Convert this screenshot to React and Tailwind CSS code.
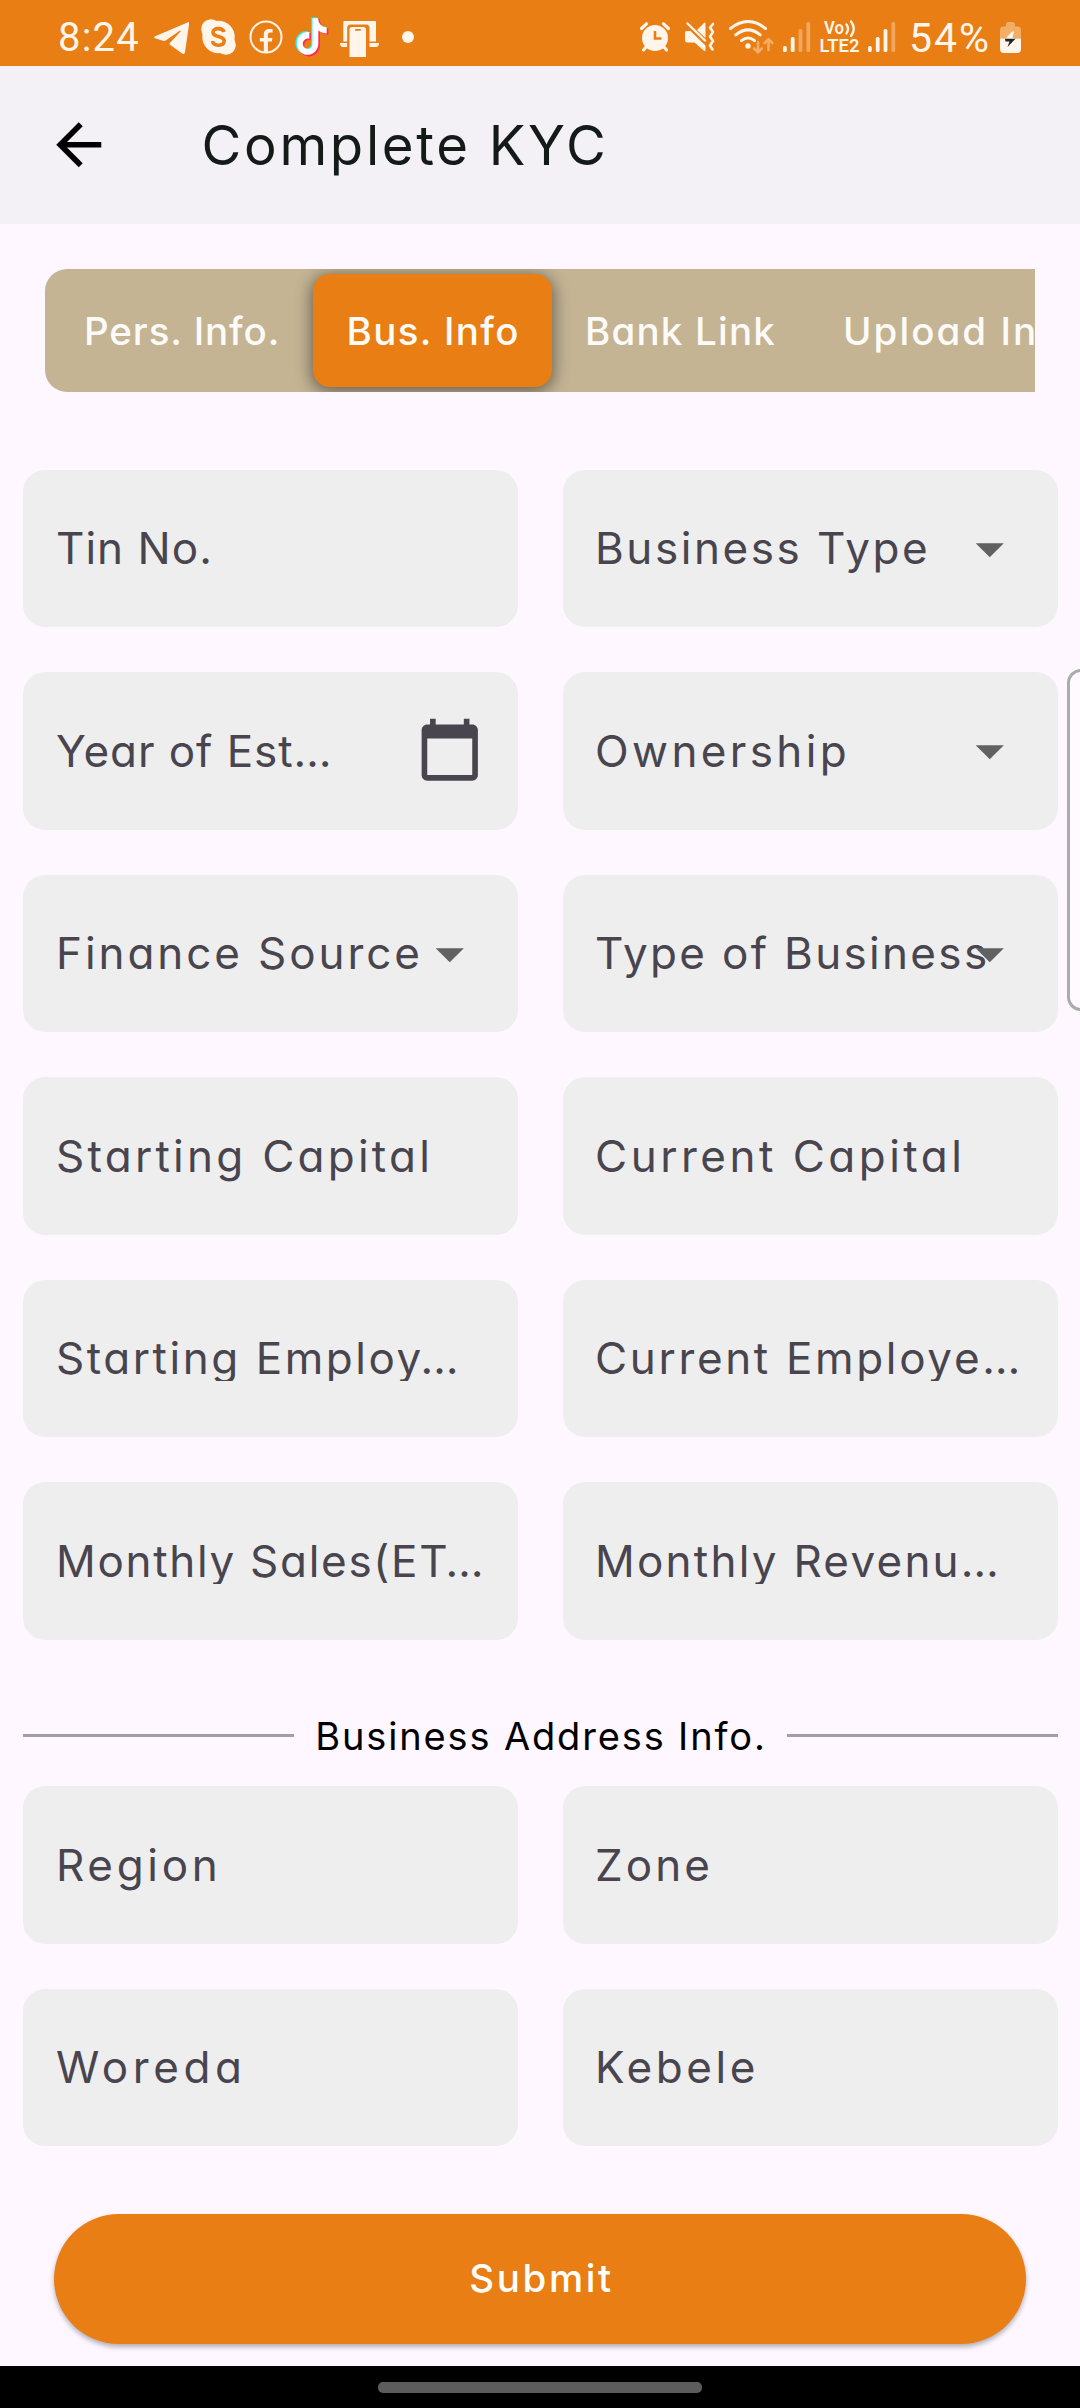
import React from 'react';

const TIKTOK =
  'M12.525.02c1.31-.02 2.61-.01 3.91-.02.08 1.53.63 3.09 1.75 4.17 1.12 1.11 2.7 1.62 4.24 1.79v4.03c-1.44-.05-2.89-.35-4.2-.97-.57-.26-1.1-.59-1.62-.93-.01 2.92.01 5.84-.02 8.75-.08 1.4-.54 2.79-1.35 3.94-1.31 1.92-3.58 3.17-5.91 3.21-1.43.08-2.86-.31-4.08-1.03-2.02-1.19-3.44-3.37-3.65-5.71-.02-.5-.03-1-.01-1.49.18-1.9 1.12-3.72 2.58-4.96 1.66-1.44 3.98-2.13 6.15-1.72.02 1.48-.04 2.96-.04 4.44-.99-.32-2.15-.23-3.02.37-.63.41-1.11 1.04-1.36 1.75-.21.51-.15 1.07-.14 1.61.24 1.64 1.82 3.02 3.5 2.87 1.12-.01 2.19-.66 2.77-1.61.19-.33.4-.67.41-1.06.1-1.79.06-3.57.07-5.36.01-4.03-.01-8.05.02-12.07z';

function Signal({ bars, className }) {
  const heights = [6, 15, 23, 30];
  return (
    <svg className={className} width="28" height="30" viewBox="0 0 28 30">
      {heights.map((h, i) => (
        <rect key={h} x={i * 7.8} y={30 - h} width="3.8" height={h} rx="1.6" fill="#fff5ea" fillOpacity={i < bars ? 1 : 0.35} />
      ))}
    </svg>
  );
}

function StatusBar() {
  return (
    <div className="flex h-[66px] shrink-0 items-center bg-[#e87e14] pt-2 text-[#fff5ea]">
      <span className="ml-[58px] w-[96px] pt-[2px] font-['Roboto',sans-serif] text-[40px] leading-none tracking-[1.2px]">8:24</span>
      {/* Telegram */}
      <svg width="35" height="33" viewBox="0 0 35 33" className="mt-[3px]" fill="currentColor">
        <path d="M34 .3C35 0 35.400.5 35.200 1.500L31 30C30.800 32 29.800 32.500 28.200 31.400L16 22.800c-.7-.5-.7-1.200-.1-1.900L26.500 9.400c.5-.7-.1-1.100-.8-.6L12 18.300c-1 .7-2 .8-3.200.4L1.200 16.300c-1.400-.4-1.400-1.400 0-2z" />
      </svg>
      {/* Skype */}
      <svg className="ml-[12px]" width="35" height="36" viewBox="0 0 35 36">
        <g fill="currentColor">
          <circle cx="17.500" cy="18" r="16.200" />
          <circle cx="10" cy="10" r="9.800" />
          <circle cx="25" cy="26" r="9.800" />
        </g>
        <path d="M23 13c-.8-2.500-2.800-3.400-5.700-3.400-3.300 0-5.300 1.500-5.300 3.900 0 5.200 11.200 2.600 11.200 8.300 0 2.800-2.300 4.400-5.700 4.400-3.200 0-5.500-1.300-6-4.200" fill="none" stroke="#e87e14" strokeWidth="3.600" />
      </svg>
      {/* Facebook */}
      <svg className="ml-[13px]" width="34" height="34" viewBox="0 0 34 34">
        <circle cx="17" cy="17" r="15.500" fill="none" stroke="currentColor" strokeWidth="2" />
        <path d="M14.800 32V21.500h-4v-3.600h4v-3.400c0-3.800 2.200-5.600 5.600-5.600 1.300 0 2.400.1 3.200.3v3.300h-2.200c-1.800 0-2.500.9-2.500 2.400v3h4.600l-.7 3.600h-3.900V32z" fill="currentColor" />
      </svg>
      {/* TikTok */}
      <svg className="ml-[12px] overflow-visible" width="35" height="40" viewBox="0 0 35 40">
        <g transform="translate(-1.900 .2) scale(1.450 1.550)"><path d={TIKTOK} fill="#25f4ee" /></g>
        <g transform="translate(.9 2.200) scale(1.450 1.550)"><path d={TIKTOK} fill="#fe2c55" /></g>
        <g transform="translate(-.4 1.300) scale(1.430 1.520)"><path d={TIKTOK} fill="#fff" /></g>
      </svg>
      {/* Linked devices */}
      <svg className="ml-[10px] mt-[4px]" width="39" height="36" viewBox="0 0 39 36">
        <path d="M3.300 20.500V1q0-1 1-1H35q1 0 1 1V20.500zM0 22H7.300v4H3Q0 26 0 22zM28.500 22H39q0 4-3 4H28.500z" fill="currentColor" />
        <path d="M7.200 36V7Q7.200 3.500 10.500 3.500H26Q29.500 3.500 29.500 7V36z" fill="#e87e14" />
        <path d="M9.500 36V8.500Q9.500 6 12 6H23.500Q26 6 26 8.500V36z" fill="currentColor" />
        <rect x="15" y="8" width="6" height="1.800" rx=".9" fill="#e87e14" />
      </svg>
      <span className="ml-[23px] size-3 rounded-full bg-[#fff5ea]" />

      {/* Alarm */}
      <svg className="ml-auto" width="30" height="30" viewBox="0 0 30 30">
        <circle cx="15" cy="16" r="13" fill="currentColor" />
        <path d="M1.500 6.500L6.500 1.800M28.500 6.500L23.500 1.800M6 25L3.500 28M24 25L26.500 28" stroke="currentColor" strokeWidth="3.200" strokeLinecap="round" />
        <path d="M15 9v7.500h6.500" fill="none" stroke="#e87e14" strokeWidth="2.600" />
      </svg>
      {/* Muted with vibration */}
      <svg className="ml-[15px]" width="30" height="30" viewBox="0 0 30 30">
        <path d="M0 10.500Q0 9 1.500 9H5.500L20.500 23.500V28Q20.500 30 19 28.800L9.500 20.500H2.500Q0 20.500 0 18zM12 8L19 .9q1.500-1 1.500.6V16z" fill="currentColor" />
        <path d="M2.500 1.500L20 18.500" stroke="currentColor" strokeWidth="2.400" strokeLinecap="round" />
        <path d="M28 1L25 4.500l3 4.500-3 4.500 3 4.500-3 4.500 2.500 4" fill="none" stroke="currentColor" strokeWidth="2.600" strokeLinecap="round" strokeLinejoin="round" transform="translate(0 1)" />
      </svg>
      {/* Wi-Fi with data arrows */}
      <svg className="ml-[14px]" width="45" height="34" viewBox="0 0 45 34" fill="none" strokeLinecap="round">
        <path d="M1.500 8.500Q19 -5.500 36.500 8.500M6.800 14.800Q19 5 31.200 14.800M12.500 20.600Q19 15.500 25.500 20.600" stroke="currentColor" strokeWidth="3" />
        <circle cx="19" cy="26" r="2.700" fill="currentColor" />
        <path d="M29 22V32M25.200 28.500L29 32.200L32.800 28.500M39.500 30V19.500M35.700 23L39.500 19.300L43.300 23" stroke="#f2ad66" strokeWidth="2.600" />
      </svg>
      <Signal bars={2} className="ml-[9px]" />
      <svg className="ml-[9px] overflow-visible" width="39" height="32" viewBox="0 0 39 32">
        <g fill="currentColor" fontFamily="Roboto, sans-serif" fontWeight="600">
          <text x="4" y="13" fontSize="18" textLength="20" lengthAdjust="spacingAndGlyphs">Vo</text>
          <text x="-.5" y="31" fontSize="18" textLength="40" lengthAdjust="spacingAndGlyphs">LTE2</text>
        </g>
        <path d="M26.500 3.500q3 4 0 9M31 .5q5.500 7 0 14.500" fill="none" stroke="currentColor" strokeWidth="2.300" strokeLinecap="round" />
      </svg>
      <Signal bars={3} className="ml-[9px]" />
      <span className="ml-[13px] w-[91px] pt-[2px] font-['Roboto',sans-serif] text-[41px] leading-none tracking-[2px]">54%</span>
      {/* Battery */}
      <svg className="mr-[59px]" width="21" height="31" viewBox="0 0 21 31">
        <path d="M0 16.500V8q0-3.500 3.500-3.500H6V2.500Q6 0 8 0h5q2 0 2 2.500V4.500h2.500Q21 4.500 21 8v8.500z" fill="#f2ad66" />
        <path d="M0 16.500H21V27q0 4-4 4H4q-4 0-4-4z" fill="currentColor" />
        <path d="M12 9.500L5 17.500H15.500L12.500 15L14 9.500z" fill="#fff5ea" />
        <path d="M5 16.800H15.500L7.500 25L9.500 19.500H5.500z" fill="#222" />
      </svg>
    </div>
  );
}

function Field({ label, tracking, icon, clip }) {
  return (
    <div className="relative flex h-[157.5px] items-center rounded-[22px] bg-[#eeeeee] pt-[1px] pl-[33.5px] text-[44px] text-[#49454f]">
      <span
        className={`whitespace-pre ${clip ? 'overflow-hidden leading-[45px]' : 'leading-[65px]'} ${tracking}`}
      >
        {label}
      </span>
      {icon === 'arrow' && (
        <svg className="absolute top-[45px] right-[34px]" width="67.500" height="67.500" viewBox="0 0 24 24" fill="#616161">
          <path d="M7 10l5 5 5-5z" />
        </svg>
      )}
      {icon === 'calendar' && (
        <svg className="absolute top-[44px] right-[34px]" width="67.500" height="67.500" viewBox="0 0 24 24" fill="#49454f">
          <path d="M20 3h-1V1h-2v2H7V1H5v2H4c-1.100 0-2 .9-2 2v16c0 1.100.9 2 2 2h16c1.100 0 2-.9 2-2V5c0-1.100-.9-2-2-2zm0 18H4V8h16v13z" />
        </svg>
      )}
    </div>
  );
}

const businessFields = [
  { label: 'Tin No.', tracking: 'tracking-[1.03px]' },
  { label: 'Business Type', tracking: '-ml-[1px] tracking-[2.55px]', icon: 'arrow' },
  { label: 'Year of Est…', tracking: 'tracking-[0.95px]', icon: 'calendar', clip: true },
  { label: 'Ownership', tracking: '-ml-[1px] tracking-[3.38px]', icon: 'arrow' },
  { label: 'Finance Source', tracking: 'tracking-[2.92px]', icon: 'arrow' },
  { label: 'Type of Business', tracking: '-ml-[1px] tracking-[2.33px]', icon: 'arrow' },
  { label: 'Starting Capital', tracking: 'tracking-[3.26px]' },
  { label: 'Current Capital', tracking: '-ml-[1px] tracking-[3.5px]' },
  { label: 'Starting Employ…', tracking: 'tracking-[2.54px]', clip: true },
  { label: 'Current Employe…', tracking: '-ml-[1px] tracking-[2.66px]', clip: true },
  { label: 'Monthly Sales(ET…', tracking: 'tracking-[1.7px]', clip: true },
  { label: 'Monthly Revenu…', tracking: '-ml-[1px] tracking-[2.24px]', clip: true },
];

const addressFields = [
  { label: 'Region', tracking: 'tracking-[3.68px]' },
  { label: 'Zone', tracking: '-ml-[1px] tracking-[3.1px]' },
  { label: 'Woreda', tracking: 'tracking-[4.6px]' },
  { label: 'Kebele', tracking: '-ml-[1px] tracking-[3.6px]' },
];

function FieldGrid({ fields, className }) {
  return (
    <div className={`grid grid-cols-2 gap-x-[45px] gap-y-[45px] px-[22.500px] ${className}`}>
      {fields.map((f) => (
        <Field key={f.label} {...f} />
      ))}
    </div>
  );
}

export default function App() {
  return (
    <div className="relative flex h-[2408px] w-[1080px] flex-col overflow-hidden bg-[#fef7ff] font-['Inter',sans-serif] [font-feature-settings:'cv11']">
      <StatusBar />
      <header className="flex h-[157.500px] shrink-0 items-center bg-[#f3f0f6] pl-[45px]">
        <svg width="67.500" height="67.500" viewBox="0 0 24 24" fill="#000">
          <path d="M20 11H7.830l5.590-5.590L12 4l-8 8 8 8 1.410-1.410L7.830 13H20v-2z" />
        </svg>
        <h1 className="ml-[89px] text-[54.500px] leading-none tracking-[2.700px] whitespace-nowrap text-[#131a17]">Complete KYC</h1>
      </header>

      <nav className="mt-[45.500px] mr-[45px] ml-[45px] flex h-[123px] shrink-0 items-center overflow-hidden rounded-l-[22px] bg-[#c4b494] text-[38.500px] font-medium whitespace-nowrap text-[#fdfbf8]">
        <span className="w-[268px] shrink-0 pt-[2px] pl-[39px] tracking-[0.900px]">Pers. Info.</span>
        <span className="flex h-[113px] w-[239px] shrink-0 items-center rounded-[17px] bg-[#e87e14] pt-[2px] pl-[33.500px] tracking-[1.350px] shadow-[0_3px_16px_2px_rgba(0,0,0,0.45)]">
          Bus. Info
        </span>
        <span className="w-[259px] shrink-0 pt-[2px] pl-[33px] tracking-[1.200px]">Bank Link</span>
        <span className="shrink-0 pt-[2px] pl-[32px] tracking-[2.050px]">Upload Info</span>
      </nav>

      <FieldGrid fields={businessFields} className="mt-[77.500px]" />

      <div className="mt-[60px] flex h-[72px] shrink-0 items-center px-[22.500px]">
        <div className="h-[3px] flex-1 bg-[#a29fa4]" />
        <h2 className="w-[493px] pl-[2px] text-center text-[38px] leading-none tracking-[1.850px] whitespace-nowrap text-black">Business Address Info.</h2>
        <div className="h-[3px] flex-1 bg-[#a29fa4]" />
      </div>

      <FieldGrid fields={addressFields} className="mt-[14.500px]" />

      <button className="mx-[54px] mt-[67.500px] h-[130.500px] shrink-0 rounded-full bg-[#e87e14] pl-[3px] text-[38.500px] font-medium tracking-[2.600px] text-white shadow-[0_3px_5px_rgba(0,0,0,0.3)]">
        Submit
      </button>

      <div className="mt-auto flex h-[42px] shrink-0 items-center justify-center bg-black">
        <div className="h-[11px] w-[324px] rounded-[5px] bg-[#5c5c5c]" />
      </div>

      {/* Edge panel handle overlapping the right side of the screen */}
      <div className="absolute top-[669px] -right-[17px] h-[342px] w-[30px] rounded-[14px] border-[3px] border-[#ababab] bg-[#fefaff]" />
    </div>
  );
}
